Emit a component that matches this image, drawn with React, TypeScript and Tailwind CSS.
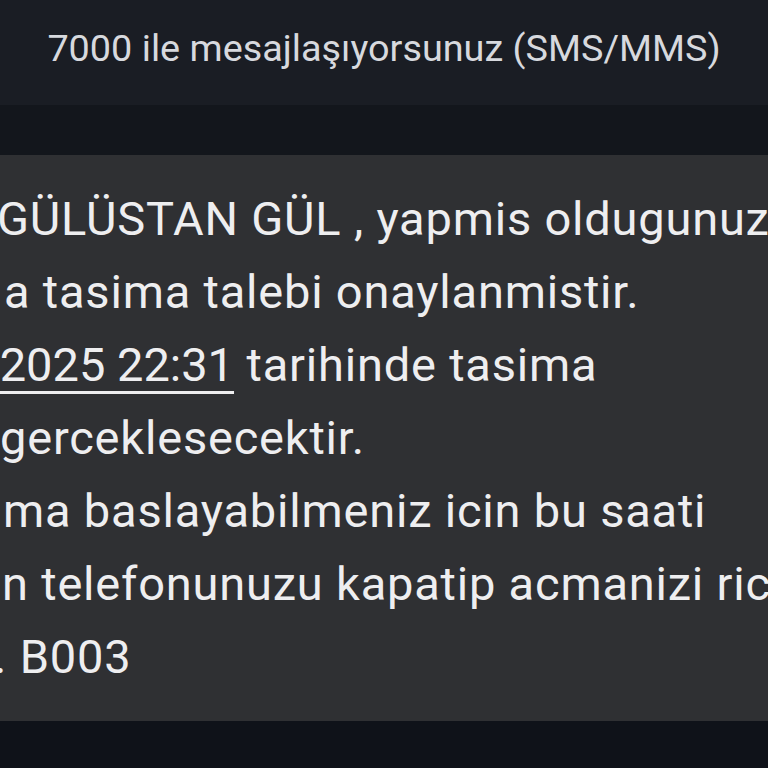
const lines: { text: React.ReactNode; ml: string }[] = [
  { text: 'GÜLÜSTAN GÜL , yapmis oldugunuz', ml: 'ml-[-3px]' },
  { text: 'a tasima talebi onaylanmistir.', ml: 'ml-[4px]' },
  {
    text: (
      <>
        <span className="underline decoration-[3px] underline-offset-[10px] tracking-normal">&nbsp;2025 22:31</span> tarihinde tasima
      </>
    ),
    ml: 'ml-[-12px]',
  },
  { text: 'gerceklesecektir.', ml: 'ml-[0px]' },
  { text: 'ma baslayabilmeniz icin bu saati', ml: 'ml-[3px]' },
  { text: 'n telefonunuzu kapatip acmanizi rica', ml: 'ml-[2px]' },
  { text: '. B003', ml: 'ml-[-6px]' },
]

export default function App() {
  return (
    <div className="w-[768px] h-[768px] bg-[#0f1219] flex flex-col overflow-hidden font-['Roboto',sans-serif]">
      <div className="h-[105px] bg-[#1a1d24] flex items-center justify-center pb-[8px]">
        <span className="text-[37.8px] text-[#d7d9de]">7000 ile mesajlaşıyorsunuz (SMS/MMS)</span>
      </div>
      <div className="h-[50px] bg-[#13161c]" />
      <div className="h-[566px] bg-[#2f3033] overflow-hidden pt-[27px]">
        {lines.map((line, i) => (
          <div
            key={i}
            className={`${line.ml} whitespace-nowrap text-[47px] tracking-[0.8px] leading-[73px] text-[#eeeef0]`}
          >
            {line.text}
          </div>
        ))}
      </div>
    </div>
  )
}
